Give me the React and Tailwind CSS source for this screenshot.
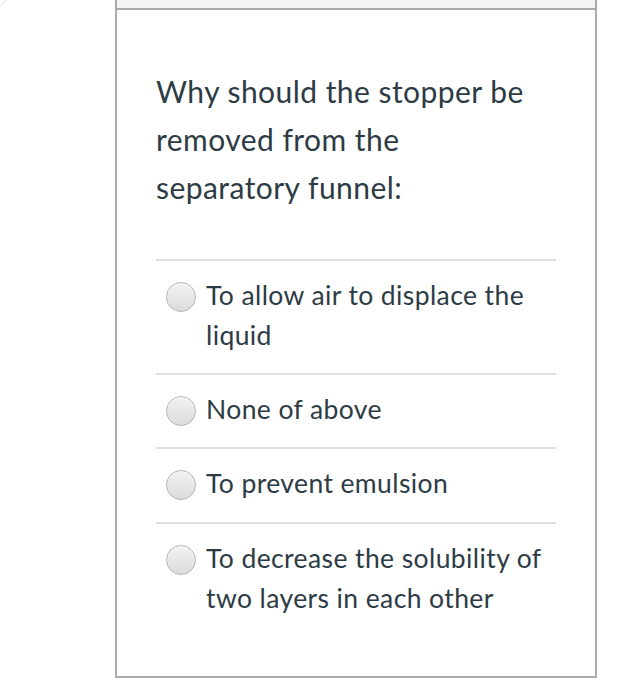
import React from "react";

const options = [
  "To allow air to displace the liquid",
  "None of above",
  "To prevent emulsion",
  "To decrease the solubility of two layers in each other",
];

function Radio() {
  return (
    <span className="mt-[7px] h-[30px] w-[30px] shrink-0 rounded-full border border-[#b4b4b4] bg-gradient-to-b from-[#f2f2f2] to-[#dcdcdc] shadow-[inset_0_1px_1px_rgba(255,255,255,0.8)]" />
  );
}

export default function App() {
  return (
    <div
      className="relative min-h-[700px] w-[627px] overflow-hidden bg-white text-[#2d3b45]"
      style={{ fontFamily: "Lato, 'Open Sans', sans-serif" }}
    >
      <div className="absolute left-[-34px] top-[-34px] h-[44px] w-[44px] rounded-full border border-[#dedede] bg-white" />
      <div className="ml-[115px] w-[482px] border-x-2 border-b-2 border-[#ababab]">
        <div className="h-[10px] border-b-2 border-[#ababab] bg-[#f4f4f4]" />
        <div className="px-[39px] pb-[39px] pt-[57px]">
          <p className="max-w-[390px] pb-[48px] text-[30px] leading-[48px] tracking-[0.45px]">
            Why should the stopper be removed from the separatory funnel:
          </p>
          <div>
            {options.map((o) => (
              <div
                key={o}
                className="flex gap-[10px] border-t-2 border-[#dedede] pb-[18px] pl-[10px] pt-[14px] [&:nth-child(n+3)]:pb-[19px]"
              >
                <Radio />
                <span className="text-[26.5px] leading-[40px] tracking-[0.4px]">{o}</span>
              </div>
            ))}
          </div>
        </div>
      </div>
    </div>
  );
}
